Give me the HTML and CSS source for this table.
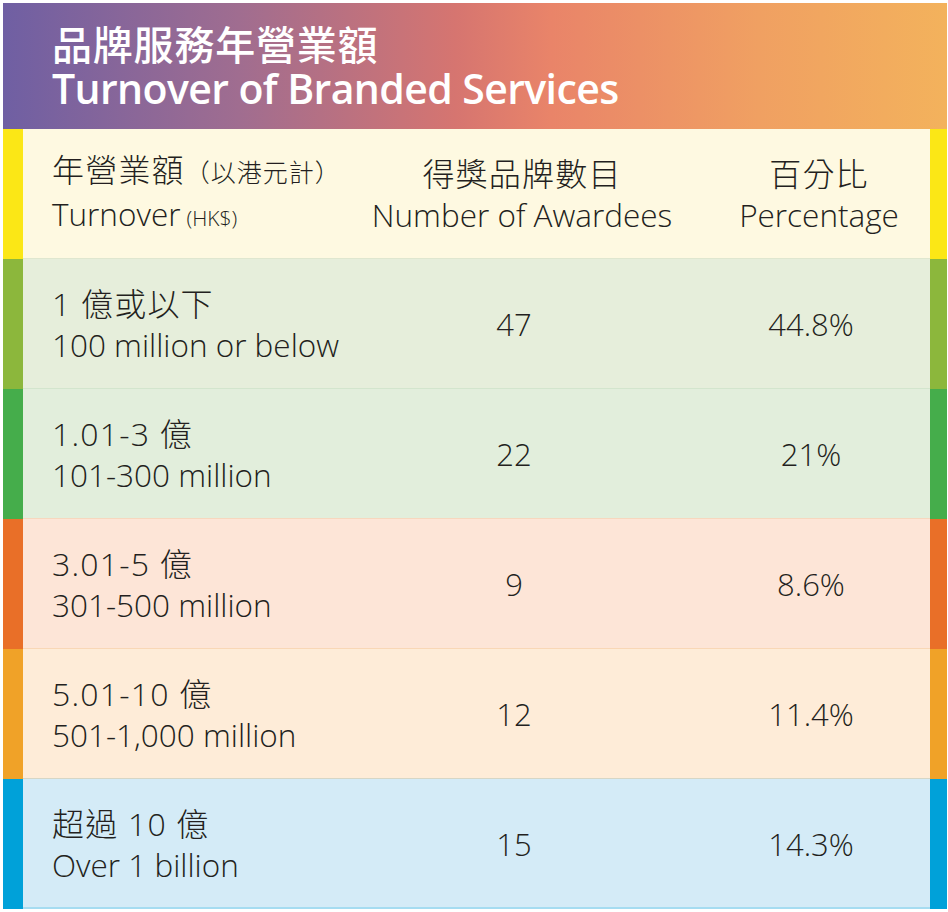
FILE: index.html
```html
<!DOCTYPE html>
<html lang="zh-Hant">
<head>
<meta charset="utf-8">
<title>Turnover of Branded Services</title>
<link rel="stylesheet" href="styles.css">
</head>
<body>
<div class="table">
  <div class="title">
    <div class="title-zh">品牌服務年營業額</div>
    <div class="title-en">Turnover of Branded Services</div>
  </div>
  <div class="row row-head">
    <div class="cell c1">
      <div class="zh">年營業額<span class="small-zh">（以港元計）</span></div>
      <div class="en">Turnover<span class="small-en">(HK$)</span></div>
    </div>
    <div class="cell c2 head-center head-c2">
      <div class="zh">得獎品牌數目</div>
      <div class="en">Number of Awardees</div>
    </div>
    <div class="cell c3 head-center head-c3">
      <div class="zh">百分比</div>
      <div class="en">Percentage</div>
    </div>
  </div>
  <div class="row row-1">
    <div class="cell c1"><div class="zh">1 億或以下</div><div class="en">100 million or below</div></div>
    <div class="cell c2 num">47</div>
    <div class="cell c3 num">44.8%</div>
  </div>
  <div class="row row-2">
    <div class="cell c1"><div class="zh">1.01-3 億</div><div class="en">101-300 million</div></div>
    <div class="cell c2 num">22</div>
    <div class="cell c3 num">21%</div>
  </div>
  <div class="row row-3">
    <div class="cell c1"><div class="zh">3.01-5 億</div><div class="en">301-500 million</div></div>
    <div class="cell c2 num">9</div>
    <div class="cell c3 num">8.6%</div>
  </div>
  <div class="row row-4">
    <div class="cell c1"><div class="zh">5.01-10 億</div><div class="en">501-1,000 million</div></div>
    <div class="cell c2 num">12</div>
    <div class="cell c3 num">11.4%</div>
  </div>
  <div class="row row-5">
    <div class="cell c1"><div class="zh">超過 10 億</div><div class="en">Over 1 billion</div></div>
    <div class="cell c2 num">15</div>
    <div class="cell c3 num">14.3%</div>
  </div>
</div>
</body>
</html>
```
FILE: styles.css
```css
html, body {
  margin: 0;
  padding: 0;
  background: #ffffff;
}

.table {
  margin: 3px 0 0 3px;
  width: 944px;
  font-family: "Open Sans", "Noto Sans CJK TC", sans-serif;
  font-weight: 300;
  color: #231f20;
}

.title {
  height: 126px;
  box-sizing: border-box;
  padding: 18px 0 0 49px;
  background: linear-gradient(90deg, #6f5fa3 0%, #a06d90 25%, #d67570 48%, #e98469 58%, #f0a062 80%, #f3b25c 100%);
  color: #ffffff;
}

.title-zh {
  font-family: "Noto Sans CJK TC", sans-serif;
  font-weight: 500;
  font-size: 40px;
  line-height: 44px;
  letter-spacing: 0.8px;
}

.title-en {
  font-family: "Open Sans", sans-serif;
  font-weight: 600;
  font-size: 41px;
  line-height: 46px;
  letter-spacing: -0.6px;
}

.row {
  display: grid;
  grid-template-columns: 337px 316px 1fr;
  height: 130px;
  box-sizing: border-box;
  border-left: 20px solid;
  border-right: 17px solid;
}

.cell {
  display: flex;
  flex-direction: column;
  justify-content: center;
  font-size: 31px;
}

.c1 {
  padding-left: 29px;
}

.c3 {
  padding-left: 24px;
}

.head-c2 {
  padding-left: 8px;
}

.head-c3 {
  padding-left: 32px;
}

.head-center {
  align-items: center;
}

.zh {
  font-family: "Open Sans", "Noto Sans CJK TC", sans-serif;
  font-size: 32px;
  line-height: 41px;
  letter-spacing: 1.2px;
}

.en {
  font-size: 31.5px;
  line-height: 41px;
}

.small-zh {
  font-size: 25px;
  letter-spacing: 1px;
}

.small-en {
  font-size: 21px;
  margin-left: 6px;
}

.num {
  align-items: center;
  padding-right: 8px;
  font-size: 31px;
}

.row-head {
  background: #fef9e1;
  border-color: #fbe716;
  box-shadow: inset 0 -1px 0 #dfe7cf;
}

.row-1 {
  background: #e6eedb;
  border-color: #8cb73c;
  box-shadow: inset 0 -1px 0 #d3e5cd;
}

.row-2 {
  background: #e2eedc;
  border-color: #45ad4b;
  box-shadow: inset 0 -1px 0 #f7d7be;
}

.row-3 {
  background: #fde5d7;
  border-color: #e96f28;
  box-shadow: inset 0 -1px 0 #f9d7b6;
}

.row-4 {
  background: #feecd8;
  border-color: #f0a228;
  box-shadow: inset 0 -1px 0 #d6d6c6;
}

.row-5 {
  background: #d4ebf7;
  border-color: #00a1d9;
  box-shadow: inset 0 -2px 0 #a5dcf1;
}
```
